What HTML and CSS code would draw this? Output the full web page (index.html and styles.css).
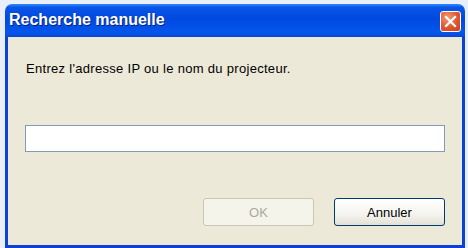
FILE: index.html
```html
<!DOCTYPE html>
<html lang="fr">
<head>
<meta charset="utf-8">
<title>Recherche manuelle</title>
<link rel="stylesheet" href="styles.css">
</head>
<body>
<div class="window">
  <div class="titlebar">
    <span class="title">Recherche manuelle</span>
    <button class="close" aria-label="Fermer">
      <svg width="13" height="13" viewBox="0 0 13 13"><path d="M2 2 L11 11 M11 2 L2 11" stroke="#fff" stroke-width="2.2" stroke-linecap="square" fill="none"/></svg>
    </button>
  </div>
  <div class="content">
    <p class="prompt">Entrez l'adresse IP ou le nom du projecteur.</p>
    <input class="field" type="text">
    <div class="actions">
      <button class="btn" disabled>OK</button>
      <button class="btn">Annuler</button>
    </div>
  </div>
</div>
</body>
</html>
```
FILE: styles.css
```css
html, body {
  margin: 0;
  padding: 0;
  background: #e9eef9;
  font-family: "Liberation Sans", Arial, sans-serif;
}
.window {
  margin: 4px 0 0 5px;
  width: 460px;
  height: 244px;
  display: flex;
  flex-direction: column;
}
.titlebar {
  height: 33px;
  flex: none;
  border-radius: 7px 7px 0 0;
  background: linear-gradient(to bottom, #2d8cff 0%, #0a55e6 10%, #0049e0 45%, #0556ec 85%, #0848d4 100%);
  display: flex;
  align-items: center;
  justify-content: space-between;
  padding: 0 4px 0 4px;
  box-sizing: border-box;
}
.title {
  color: #fff;
  font-weight: bold;
  font-size: 16px;
  text-shadow: 1px 1px 0 #0a1f7a;
  padding-bottom: 1px;
}
.close {
  width: 21px;
  height: 21px;
  padding: 0;
  border: 1px solid #fff;
  border-radius: 3px;
  background: radial-gradient(circle at 35% 30%, #f09a76 0%, #e05530 55%, #c63e18 100%);
  display: flex;
  align-items: center;
  justify-content: center;
  margin-top: 1px;
}
.content {
  flex: 1;
  background: #ece9d8;
  border: 3px solid #0a42d6;
  border-top: none;
  padding: 24px 17px 0 17px;
  display: flex;
  flex-direction: column;
}
.prompt {
  margin: 0 0 0 1px;
  font-size: 13px;
  line-height: 16px;
  letter-spacing: 0.3px;
  color: #000;
}
.field {
  margin: 48px 0 0 0;
  height: 27px;
  box-sizing: border-box;
  border: 1px solid #7f9db9;
  background: #fff;
  width: 420px;
  padding: 0;
}
.actions {
  display: flex;
  justify-content: flex-end;
  gap: 20px;
  margin-top: 46px;
}
.btn {
  width: 111px;
  height: 28px;
  border: 1px solid #003c74;
  border-radius: 3px;
  background: linear-gradient(to bottom, #ffffff 0%, #f4f3ee 60%, #e3e1d6 100%);
  font-family: "Liberation Sans", Arial, sans-serif;
  font-size: 13px;
  color: #000;
  padding: 0;
}
.btn:disabled {
  border-color: #c9c7ba;
  background: #f5f4ea;
  color: #aca899;
}
```
